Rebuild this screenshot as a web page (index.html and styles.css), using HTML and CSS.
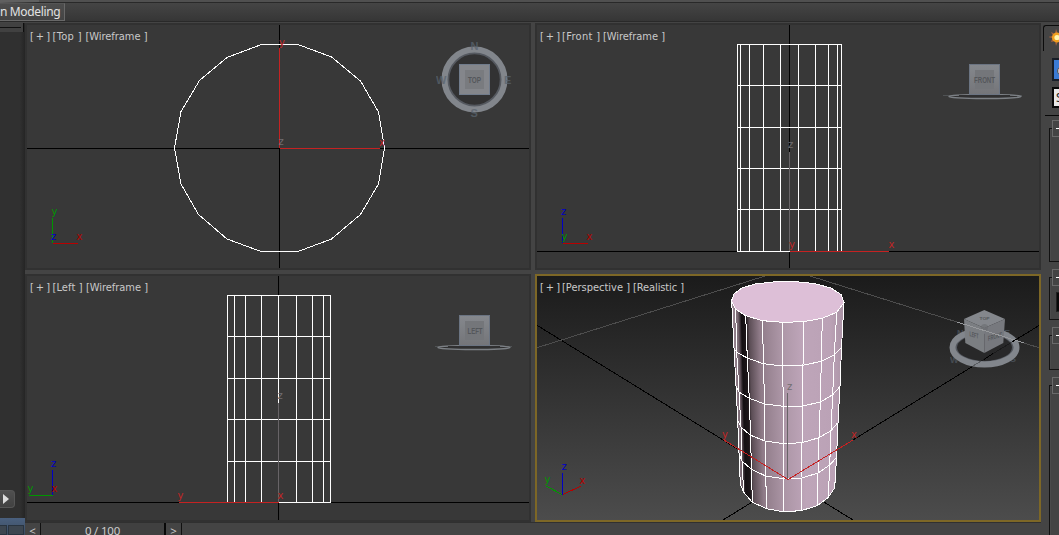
FILE: index.html
```
<!DOCTYPE html>
<html lang="en">
<head>
<meta charset="utf-8">
<title>Viewports</title>
<link rel="stylesheet" href="styles.css">
</head>
<body>
<div class="app">
  <header class="ribbon">
    <div class="ribbon-edge"></div>
    <div class="ribbon-row"><span class="ribbon-tab">n Modeling</span></div>
  </header>
  <main class="workspace">
    <aside class="left-bar">
      <div class="left-head"></div>
      <button class="play"><svg width="6" height="10" viewBox="0 0 6 10"><path d="M0 0L6 5L0 10Z" fill="#dcdcdc"/></svg></button>
      <div class="left-foot"><i></i><i></i></div>
    </aside>
    <section class="center">
      <div class="grid">
        <svg class="view" viewBox="27 25 502 243">
          <g class="lines">
            <path class="axis" d="M27 148.5H529M279.5 25V268"/>
            <path class="wire" d="M174.5 148L181 111.5L199.5 80.5L227 57.5L261.5 44.5H298L331.5 57L360.5 81L378.5 112L384.5 148L378.5 184L360.5 214.500L331.500 239L298 251.500H261L227 239L198.500 214.500L181 184Z"/>
            <path class="red" d="M279.500 48V148M280 148.500H380"/>
            <path class="green" d="M52.500 218V243"/>
            <path class="tripod-red" d="M53 243.500H78"/>
          </g>
          <circle cx="474.500" cy="79.500" r="26" fill="#323233"/>
          <circle cx="474.500" cy="79.500" r="26.500" fill="none" stroke="#555960" stroke-width="2.500"/>
          <circle cx="474.500" cy="79.500" r="30" fill="none" stroke="#82868c" stroke-width="6"/>
          <g class="ring-text"><text x="470.500" y="50">N</text><text x="436" y="84">W</text><text x="504" y="84">E</text><text x="470.500" y="117">S</text></g>
          <rect x="459.500" y="64.500" width="30" height="30" fill="#84868b" stroke="#717c8c"/>
          <rect x="465" y="70" width="19" height="19" fill="#797b7f"/>
          <text class="face" x="468" y="82.500" textLength="13" lengthAdjust="spacingAndGlyphs">TOP</text>
          <g class="label"><text x="30" y="40" textLength="20">[+]</text><text x="52.500" y="40" textLength="29">[Top ]</text><text x="85.500" y="40" textLength="62">[Wireframe ]</text></g>
          <text class="t red-t" x="279" y="46">y</text><text class="t red-t" x="379" y="146">x</text><text class="t gray-t" x="278.500" y="145">z</text>
          <text class="t green-t" x="51.500" y="215">y</text><text class="t blue-t" x="51" y="240">z</text><text class="t dred-t" x="76.500" y="240">x</text>
        </svg>
        <svg class="view" viewBox="537 25 502 243">
          <g class="lines">
            <path class="axis" d="M537 251.500H1039M789.500 25V268"/>
            <path class="wire" d="M737.500 44V251M740.500 44V251M749.500 44V251M763.500 44V251M780.500 44V251M798.500 44V251M815.500 44V251M828.500 44V251M837.500 44V251M841.500 44V251M737 44.500H842M737 85.500H842M737 127.500H842M737 168.500H842M737 209.500H842M737 251.500H842"/>
            <path class="gray" d="M789.500 152V251"/>
            <path class="red" d="M790 251.500H889"/>
            <path class="blue" d="M562.500 218V243"/>
            <path class="tripod-red" d="M563 243.500H588"/>
          </g>
          <path d="M943 95.500H1022" stroke="#5a5d61" opacity=".7"/>
          <ellipse cx="985" cy="96.500" rx="36" ry="2" fill="#303031" stroke="#7c8085" stroke-width="1.500"/>
          <path d="M959 96H1010" stroke="#303031" stroke-width="2"/>
          <rect x="969.500" y="64.500" width="30" height="30" fill="url(#face)" stroke="#6b7482"/>
          <rect x="975" y="70" width="19" height="19" fill="#74767a"/>
          <text class="face" x="974" y="82.500" textLength="21" lengthAdjust="spacingAndGlyphs">FRONT</text>
          <g class="label"><text x="540" y="40" textLength="20">[+]</text><text x="562" y="40" textLength="38">[Front ]</text><text x="603" y="40" textLength="62">[Wireframe ]</text></g>
          <text class="t gray-t" x="788" y="148">z</text><text class="t red-t" x="789" y="248">y</text><text class="t red-t" x="888.500" y="248">x</text>
          <text class="t blue-t" x="561" y="215">z</text><text class="t green-t" x="561.500" y="240">y</text><text class="t dred-t" x="586.500" y="240">x</text>
        </svg>
        <svg class="view" viewBox="27 276 502 244">
          <g class="lines">
            <path class="axis" d="M27 502.500H529M278.500 276V520"/>
            <path class="wire" d="M227.500 295V502M234.500 295V502M245.500 295V502M261.500 295V502M278.500 295V502M296.500 295V502M312.500 295V502M323.500 295V502M330.500 295V502M227 295.500H331M227 336.500H331M227 378.500H331M227 419.500H331M227 461.500H331M227 502.500H331"/>
            <path class="gray" d="M278.500 403V502"/>
            <path class="red" d="M179 502.500H279"/>
            <path class="blue" d="M52.500 470V495"/>
            <path class="green" d="M29 495.500H53"/>
          </g>
          <path d="M435 346.500H512" stroke="#5a5d61" opacity=".7"/>
          <ellipse cx="474" cy="347.500" rx="36" ry="2" fill="#303031" stroke="#7c8085" stroke-width="1.500"/>
          <path d="M448 347H500" stroke="#303031" stroke-width="2"/>
          <rect x="459.500" y="315.500" width="30" height="30" fill="url(#face)" stroke="#6b7482"/>
          <rect x="465" y="321" width="19" height="19" fill="#74767a"/>
          <text class="face" x="467.500" y="333.500" textLength="15" lengthAdjust="spacingAndGlyphs">LEFT</text>
          <g class="label"><text x="30" y="291" textLength="20">[+]</text><text x="52.500" y="291" textLength="30">[Left ]</text><text x="86" y="291" textLength="62">[Wireframe ]</text></g>
          <text class="t gray-t" x="277.500" y="399">z</text><text class="t red-t" x="177.500" y="499">y</text><text class="t red-t" x="277.500" y="499">x</text>
          <text class="t blue-t" x="51" y="467">z</text><text class="t green-t" x="27.500" y="492">y</text><text class="t dred-t" x="51.500" y="492">x</text>
        </svg>
        <svg class="view active" viewBox="537 276 502 244">
          <defs>
            <linearGradient id="face" x2="0" y2="1"><stop stop-color="#85888d"/><stop offset="1" stop-color="#747579"/></linearGradient>
            <linearGradient id="body" gradientUnits="userSpaceOnUse" x1="732" y1="302" x2="844" y2="302" gradientTransform="matrix(1 0 .025 1 -7.500 0)">
              <stop stop-color="#a08c99"/><stop offset=".05" stop-color="#75656f"/><stop offset=".08" stop-color="#141013"/><stop offset=".12" stop-color="#1c1619"/><stop offset=".15" stop-color="#5c4e56"/><stop offset=".24" stop-color="#8f7b88"/><stop offset=".42" stop-color="#ab95a5"/><stop offset=".62" stop-color="#bea5b9"/><stop offset=".87" stop-color="#bba2b6"/><stop offset="1" stop-color="#a891a3"/>
            </linearGradient>
          </defs>
          <g class="lines">
            <path class="axis" d="M537 325.300L853 520M1039 325.500L723 520"/>
            <path class="ground" d="M537 347.700L765 276M810 276L1039 347.700"/>
            <path fill="url(#body)" d="M731.700 302L740.300 484.300L743.700 492.300L752.300 502.300L766.700 508.700L783.300 511.700L801 510.700L817.300 505.700L828.300 497.300L834.700 487.700L844 302Z"/>
            <path class="wire top" d="M731.500 301L734 294L742 288L755 284L773 282L794 281.500L814 283.500L831 288L841 294.500L844 302.500L836.700 312.300L822.300 318.300L803.300 321.700L782.300 322.300L762.700 320.700L745.700 315.700L735.700 309.300Z"/>
            <path class="wire" d="M734 348.300L736.700 352.300L747.300 358L763.300 363.700L782.700 366L803 365.300L821.300 361.300L834.300 355L841.300 347.700M736 386L739 392L749.300 398.300L764.700 404L783 406.300L802.700 406L820.300 402L832.700 394.700L840 386.500M737.700 420L741 427L750 435L765 441L783.300 443.700L802 442.700L819 437.700L831 430.700L837.700 422.700M739 453.300L742 461L751.300 469.300L765.700 476L783.300 478.700L801 478.300L818 473L829.700 465L836.300 457.700"/>
            <path class="wire" d="M731.700 302L734 348L736 386L737.700 420L739 453L740.300 484.300L743.700 492.300L752.300 502.300L766.700 508.700L783.300 511.700L801 510.700L817.300 505.700L828.300 497.300L834.700 487.700L836.500 458L838 423L840 386.500L841.500 348L844 302"/>
            <path class="wire" d="M735.700 309.300L736.700 352.300L739 392L741 427L742 461L743.700 492.300M745.700 315.700L747.300 358L749.300 398.300L750.500 435L751.500 469.300L752.300 502.300M762.700 320.700L763.300 363.700L764.700 404L765 441L765.700 476L766.700 508.700M782.500 322.300V366L783.500 406V511.700M803.300 321.700L803 365.300L802.700 406L802 442.700L801 478.300V510.700M822.300 318.300L821.300 361.300L820.300 402L819 437.700L818 473L817.300 505.700M836.700 312.300L834.300 355L832.700 394.700L831 430.700L829.700 465L828.300 497.300"/>
            <path class="gray" d="M787.500 393V479"/>
            <path class="red" d="M724 440L788 479.500L853 440"/>
            <path class="blue" d="M562.500 473V495"/>
            <path class="green" d="M546 486L562 494.500"/>
            <path class="tripod-red" d="M563 494.500L581 486"/>
          </g>
          <g class="ring-text dim"><text x="957" y="336">N</text><text x="1004" y="336">E</text><text x="950" y="363">W</text><text x="1010" y="362">S</text></g>
          <ellipse cx="984.500" cy="347.500" rx="29" ry="15" fill="#282829"/>
          <ellipse cx="984.500" cy="347.500" rx="28.500" ry="14.500" fill="none" stroke="#555960" stroke-width="2"/>
          <ellipse cx="984.500" cy="347.500" rx="32" ry="17" fill="none" stroke="#82868c" stroke-width="6"/>
          <path fill="#84878c" d="M984.300 310L1005 319L984.300 328L964 319Z"/>
          <path fill="#7b7e82" d="M964 319L984.300 328V353L965.300 343Z"/>
          <path fill="#77797e" d="M1005 319L984.300 328V353L1003.300 343Z"/>
          <text class="face tiny" transform="matrix(1 .3 0 1 969.500 336)" textLength="9" lengthAdjust="spacingAndGlyphs">LEFT</text>
          <text class="face tiny" transform="matrix(1 -.3 0 1 988 341)" textLength="14" lengthAdjust="spacingAndGlyphs">FRONT</text>
          <text class="face micro" x="979.500" y="319.500" textLength="10" lengthAdjust="spacingAndGlyphs">TOP</text>
          <circle cx="984.500" cy="327.500" r="3.500" fill="#676a6e" opacity=".55"/>
          <path class="over lines" d="M957 322L1024 343"/>
          <path class="axis lines" d="M973 366L1025 334" stroke-opacity=".3"/>
          <path class="axis lines" d="M984 359.500L993 353.500M1012 342L1030 331"/>
          <g class="label"><text x="540" y="291" textLength="20">[+]</text><text x="562" y="291" textLength="68">[Perspective ]</text><text x="633" y="291" textLength="51">[Realistic ]</text></g>
          <text class="t gray-t" x="787" y="390">z</text><text class="t red-t" x="722" y="438">y</text><text class="t red-t" x="851" y="438">x</text>
          <text class="t blue-t" x="561.500" y="470">z</text><text class="t green-t" x="544.500" y="483">y</text><text class="t dred-t" x="579.500" y="484">x</text>
        </svg>
      </div>
      <footer class="timeline">
        <span class="step">&lt;</span><span class="slider">0 / 100</span><span class="step">&gt;</span><span class="track"></span>
      </footer>
    </section>
    <aside class="panel">
      <div class="panel-tab"><svg width="16" height="19" viewBox="0 0 16 19"><path d="M7 1L9 6L13 4L16 6V14L13 15L9 13L7 18L6 13L2 14L3.500 10L-1 9L4 8L2 4L6 6Z" fill="#a6633c"/><circle cx="8" cy="9.500" r="5" fill="#f0a020"/><circle cx="8" cy="9.500" r="2.600" fill="#fff6b0"/></svg></div>
      <div class="geometry"><i></i></div>
      <div class="dropdown">S</div>
      <div class="rule"></div>
      <div class="roll r1"><b></b></div>
      <div class="roll r2"><b></b><i></i></div>
      <div class="roll r3"><b></b></div>
      <div class="roll r4"><b></b></div>
    </aside>
  </main>
</div>
</body>
</html>
```
FILE: styles.css
```
* { box-sizing: border-box; }
body { margin: 0; background: #444; color: #ccc; font-family: "Noto Sans", sans-serif; font-size: 12px; overflow: hidden; }
.app { width: 1059px; height: 535px; display: flex; flex-direction: column; overflow: hidden; }
.ribbon { height: 23px; background: #444; flex: none; }
.ribbon-edge { height: 3px; background: #505050; border-bottom: 1px solid #292929; border-left: 39px solid #606060; }
.ribbon-row { height: 19px; background: linear-gradient(#454545, #363636); border-bottom: 1px solid #292929; display: flex; }
.ribbon-tab { width: 65px; height: 18px; background: linear-gradient(#4d4d4d, #444); border: 1px solid #686868; border-left: 0; border-top-color: #555; line-height: 16px; font-size: 12px; letter-spacing: -.35px; color: #e2e2e2; white-space: nowrap; }
.workspace { display: flex; flex: 1; min-height: 0; }
.left-bar { width: 25px; background: linear-gradient(90deg, #303030 0 20px, #252525); display: flex; flex-direction: column; flex: none; }
.left-head { height: 10px; width: 24px; background: linear-gradient(#111, #111) 0 4px / 21px 1px no-repeat, #414141; border-right: 1px solid #0e0e0e; }
.play { margin: 458px 0 0; width: 15px; height: 20px; padding: 0 0 0 3px; border: 1px solid #565656; border-left: 0; border-radius: 0 4px 4px 0; background: linear-gradient(#505050, #414141); display: flex; align-items: center; }
.play svg { flex: none; }
.left-foot { margin-top: 10px; flex: 1; background: linear-gradient(#4a607e, #3c4d63); padding-top: 7px; display: flex; gap: 1px; }
.left-foot i { width: 7px; height: 10px; background: #3d4650; border: 1px solid #293440; border-left: 0; }
.left-foot i + i { width: 16px; border-left: 1px solid #293440; }
.center { width: 1016px; display: flex; flex-direction: column; flex: none; }
.grid { display: grid; grid-template-columns: 506px 506px; grid-template-rows: 247px 248px; gap: 4px; }
.view { display: block; width: 506px; height: 100%; background: #383838; border: 2px solid #313131; }
.view.active { background: linear-gradient(#1b1b1b, #4c4c4c); border-color: #7d6726; }
.lines { shape-rendering: crispEdges; fill: none; }
.axis { stroke: #000; }
.wire { stroke: #fff; }
.top { fill: #ddbfd7; }
.red { stroke: #c52222; }
.tripod-red { stroke: #b90000; }
.green { stroke: #009600; }
.blue { stroke: #0000c4; }
.gray { stroke: #686467; }
.ground { stroke: #4d4d4d; }
.over { stroke: #97999c; }
.label { fill: #c9c9c9; font-family: "DejaVu Sans Condensed", "DejaVu Sans", sans-serif; font-size: 11px; font-stretch: condensed; }
.t { font-family: "DejaVu Sans", sans-serif; font-size: 10px; }
.red-t { fill: #c22626; }
.dred-t { fill: #b60000; }
.green-t { fill: #009600; }
.blue-t { fill: #0000c4; }
.gray-t { fill: #706d70; }
.ring-text { fill: #59636e; font: bold 11px "Liberation Sans", sans-serif; opacity: .75; }
.dim { font-size: 9px; opacity: .6; }
.face { fill: #54575b; font: bold 9px "Liberation Sans", sans-serif; }
.face.tiny { font-size: 7px; }
.face.micro { font-size: 4px; }
.timeline { flex: 1; display: flex; border-top: 1px solid #303030; background: #444; overflow: hidden; }
.timeline span { height: 13px; line-height: 16px; text-align: center; font-size: 11.5px; }
.step { width: 16px; border-right: 1px solid #111; }
.slider { width: 125px; border-right: 2px solid #080808; background: #404040; letter-spacing: -.2px; }
.track { flex: 1; }
.panel { width: 18px; display: flex; flex-direction: column; flex: none; overflow: hidden; }
.panel-tab { margin: 2px 0 0 2px; height: 26px; width: 24px; border: solid #0c0c0c; border-width: 1px 0 0 1px; border-radius: 3px 0 0; padding: 2px 0 0 5px; flex: none; }
.geometry { margin: 7px 0 0 11px; width: 20px; height: 23px; background: #3b7bd5; border: 2px solid #171d27; flex: none; padding: 6px 0 0 3px; }
.geometry i { display: block; width: 10px; height: 10px; border-radius: 50%; background: #b9c4d1; border: 1px solid #555; }
.dropdown { margin: 6px 0 0 11px; height: 21px; width: 24px; background: #e8e8e8; border: 2px solid #080808; color: #222; line-height: 18px; padding-left: 2px; flex: none; }
.rule { margin: 7px 0 0 4px; height: 1px; background: #080808; flex: none; }
.roll { margin: 12px 0 0 8px; width: 24px; border: 1px solid #111; box-shadow: inset 1px 1px #4b4b4b; flex: none; }
.roll b { display: block; margin: -9px 0 0 2px; width: 20px; height: 17px; background: #444; border: 1px solid #6a6a6a; padding: 7px 0 0 3px; }
.roll b::after { content: ""; display: block; width: 8px; height: 1px; background: #fff; }
.roll i { display: block; margin: 6px 0 0 6px; height: 20px; background: #080808; border: 1px solid #202020; }
.r1 { height: 134px; }
.r2 { margin-top: 15px; height: 43px; }
.r3 { margin-top: 15px; height: 35px; }
.r4 { margin-top: 15px; height: 155px; }
```
